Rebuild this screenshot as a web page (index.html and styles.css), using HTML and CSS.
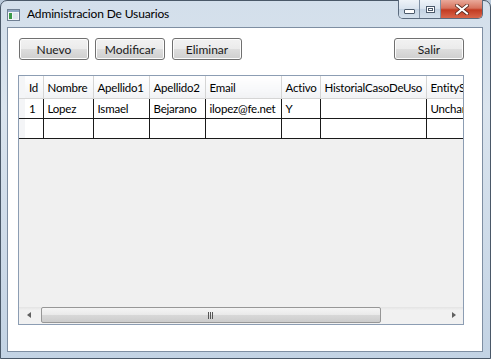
FILE: index.html
```html
<!DOCTYPE html>
<html lang="es">

<head>
    <meta charset="UTF-8">
    <title>Administracion De Usuarios</title>
    <link rel="stylesheet" href="styles.css">
</head>

<body>
    <div class="window">
        <div class="titlebar">
            <svg class="app-icon" width="13" height="12" viewBox="0 0 13 12">
                <rect x="0.5" y="0.5" width="12" height="11" fill="#f4f6f9" stroke="#6f7f93" />
                <rect x="1" y="1" width="11" height="2" fill="#8fa7c4" />
                <rect x="2" y="4" width="3" height="6" fill="#3c9a4a" />
                <rect x="6" y="4" width="5" height="6" fill="#dfe6ee" />
            </svg>
            <span class="title">Administracion De Usuarios</span>
            <div class="controls">
                <div class="ctl min"><span class="bar"></span></div>
                <div class="ctl max"><span class="box"></span></div>
                <div class="ctl close">
                    <svg width="14" height="11" viewBox="0 0 14 11">
                        <path d="M2 1.5 L12 9.5 M12 1.5 L2 9.5" stroke="#5a2a20" stroke-width="3.6" stroke-linecap="square" />
                        <path d="M2 1.5 L12 9.5 M12 1.5 L2 9.5" stroke="#ffffff" stroke-width="2" stroke-linecap="square" />
                    </svg>
                </div>
            </div>
        </div>

        <div class="client">
            <div class="toolbar">
                <button type="button" class="btn">Nuevo</button>
                <button type="button" class="btn">Modificar</button>
                <button type="button" class="btn eliminar">Eliminar</button>
                <button type="button" class="btn salir">Salir</button>
            </div>

            <div class="grid">
                <div class="grid-body">
                    <table>
                        <colgroup>
                            <col style="width: 6px">
                            <col style="width: 18px">
                            <col style="width: 50px">
                            <col style="width: 56px">
                            <col style="width: 56px">
                            <col style="width: 76px">
                            <col style="width: 39px">
                            <col style="width: 106px">
                            <col style="width: 90px">
                        </colgroup>
                        <thead>
                            <tr>
                                <th class="rh"></th>
                                <th>Id</th>
                                <th>Nombre</th>
                                <th>Apellido1</th>
                                <th>Apellido2</th>
                                <th>Email</th>
                                <th>Activo</th>
                                <th>HistorialCasoDeUso</th>
                                <th>EntityState</th>
                            </tr>
                        </thead>
                        <tbody>
                            <tr>
                                <td class="rh"></td>
                                <td>1</td>
                                <td>Lopez</td>
                                <td>Ismael</td>
                                <td>Bejarano</td>
                                <td>ilopez@fe.net</td>
                                <td>Y</td>
                                <td></td>
                                <td>Unchanged</td>
                            </tr>
                            <tr>
                                <td class="rh"></td>
                                <td></td>
                                <td></td>
                                <td></td>
                                <td></td>
                                <td></td>
                                <td></td>
                                <td></td>
                                <td></td>
                            </tr>
                        </tbody>
                    </table>
                </div>
                <div class="filler"></div>
                <div class="hscroll">
                    <div class="arrow left"></div>
                    <div class="thumb"><span class="grip"></span></div>
                    <div class="track"></div>
                    <div class="arrow right"></div>
                </div>
            </div>
        </div>
    </div>
</body>

</html>
```

FILE: styles.css
```css
html,
body {
    margin: 0;
    padding: 0;
}

body {
    width: 491px;
    height: 359px;
    overflow: hidden;
    font-family: Lato, "Noto Sans", sans-serif;
    font-size: 12px;
    color: #000;
    background-color: #b9c9da;
}

.window {
    box-sizing: border-box;
    width: 491px;
    height: 359px;
    display: flex;
    flex-direction: column;
    border: 1px solid #4a5868;
    border-radius: 7px 7px 0 0;
    background: linear-gradient(to bottom, #d3dfeb 0%, #dae4ee 30%, #c3d3e4 100%);
}

.titlebar {
    height: 26px;
    display: flex;
    align-items: flex-start;
    position: relative;
}

.app-icon {
    margin: 8px 0 0 6px;
}

.title {
    margin: 5px 0 0 7px;
    font-size: 12px;
    letter-spacing: -0.15px;
    color: #000;
}

.controls {
    position: absolute;
    top: -1px;
    right: 7px;
    display: flex;
    height: 18px;
    border: 1px solid #5b6b7e;
    border-top: none;
    border-radius: 0 0 5px 5px;
    overflow: hidden;
}

.ctl {
    display: flex;
    align-items: center;
    justify-content: center;
    height: 18px;
    box-sizing: border-box;
}

.min,
.max {
    width: 21px;
    background: linear-gradient(to bottom, #eef3f8 0%, #d9e3ee 50%, #c3d2e2 51%, #d3e0ec 100%);
    border-right: 1px solid #7f90a4;
}

.min .bar {
    display: block;
    width: 9px;
    height: 3px;
    margin-top: 5px;
    background: #fff;
    border: 1px solid #4c5a6b;
    border-radius: 1px;
}

.max .box {
    display: block;
    width: 7px;
    height: 5px;
    background: #fff;
    border: 1px solid #4c5a6b;
    box-shadow: inset 0 0 0 1px #fff, inset 0 0 0 2px #4c5a6b;
}

.close {
    width: 41px;
    background: linear-gradient(to bottom, #e9a99a 0%, #d7735e 45%, #c23b22 55%, #d9664b 100%);
}

.client {
    flex: 1;
    margin: 0 7px 6px 6px;
    background: #fff;
    border: 1px solid #7e8ea2;
    display: flex;
    flex-direction: column;
}

.toolbar {
    display: flex;
    gap: 6px;
    padding: 10px 18px 0 11px;
}

.btn {
    width: 70px;
    height: 22px;
    padding: 0;
    font-family: inherit;
    font-size: 12px;
    color: #1a1a1a;
    border: 1px solid #707070;
    border-radius: 3px;
    background: linear-gradient(to bottom, #f2f2f2 0%, #ebebeb 50%, #dddddd 51%, #cfcfcf 100%);
    box-shadow: inset 0 0 0 1px #fcfcfc;
}

.toolbar .eliminar {
    margin-left: 1px;
}

.toolbar .salir {
    margin-left: auto;
}

.grid {
    flex: 1;
    margin: 15px 18px 26px 10px;
    border: 1px solid #8c9db3;
    display: flex;
    flex-direction: column;
    overflow: hidden;
    background: #f0f0f0;
}

.grid-body {
    overflow: hidden;
    background: #f0f0f0;
}

table {
    border-collapse: collapse;
    table-layout: fixed;
    width: 497px;
    background: #fff;
    font-size: 11.5px;
    letter-spacing: -0.2px;
}

th {
    height: 22px;
    padding: 0 0 0 4px;
    font-weight: normal;
    text-align: left;
    white-space: nowrap;
    overflow: hidden;
    background: linear-gradient(to bottom, #ffffff 0%, #f7f8fa 60%, #f1f2f4 100%);
    border-right: 1px solid #d5d5d5;
    border-bottom: 1px solid #d5d5d5;
}

td {
    height: 19px;
    padding: 0 0 0 4px;
    white-space: nowrap;
    overflow: hidden;
    border-right: 1px solid #1a1a1a;
    border-bottom: 1px solid #1a1a1a;
}

th.rh,
td.rh {
    padding: 0;
    border-right: none;
    background: #f4f5f7;
}

.filler {
    flex: 1;
    background: #f0f0f0;
}

.hscroll {
    height: 17px;
    display: flex;
    background: linear-gradient(to bottom, #e3e3e3 0%, #f1f1f1 20%, #f1f1f1 100%);
}

.arrow {
    width: 22px;
    position: relative;
}

.arrow::after {
    content: "";
    position: absolute;
    top: 5px;
    width: 0;
    height: 0;
    border-top: 3px solid transparent;
    border-bottom: 3px solid transparent;
}

.arrow.left::after {
    left: 8px;
    border-right: 4px solid #606060;
}

.arrow.right::after {
    left: 11px;
    border-left: 4px solid #606060;
}

.thumb {
    width: 340px;
    box-sizing: border-box;
    height: 16px;
    border: 1px solid #979797;
    border-radius: 2px;
    background: linear-gradient(to bottom, #f5f5f5 0%, #e9e9e9 50%, #d8d8d8 51%, #cccccc 100%);
    display: flex;
    align-items: center;
    justify-content: center;
}

.grip {
    width: 6px;
    height: 7px;
    background: repeating-linear-gradient(to right, #555 0, #555 1px, transparent 1px, transparent 2px);
}

.track {
    flex: 1;
}
```
